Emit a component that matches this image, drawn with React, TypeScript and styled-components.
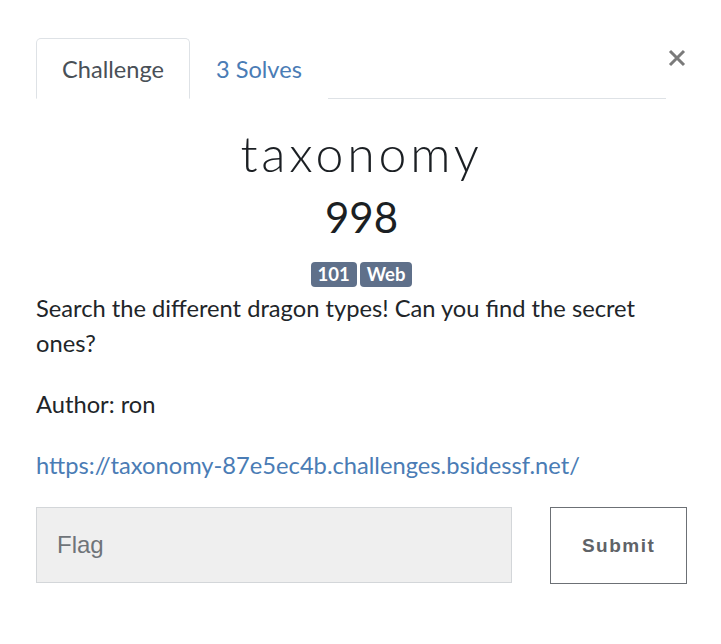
import React from "react";
import styled, { createGlobalStyle } from "styled-components";

const Global = createGlobalStyle`
  html, body {
    margin: 0;
    padding: 0;
    background: #ffffff;
    font-family: Lato, "Noto Sans", sans-serif;
    color: #212529;
  }
`;

const Modal = styled.div`
  width: 651px;
  padding: 38px 34px 0 36px;
`;

const Header = styled.div`
  display: flex;
  align-items: flex-start;
`;

const Tabs = styled.ul`
  flex: 1;
  display: flex;
  margin: 0;
  padding: 0;
  list-style: none;
  border-bottom: 1px solid #dee2e6;
`;

const Tab = styled.li<{ $active?: boolean }>`
  margin-bottom: -1px;
  padding: 15px 25px 14px;
  font-size: 23.6px;
  line-height: 30px;
  border: 1px solid ${(p) => (p.$active ? "#dee2e6" : "transparent")};
  border-bottom-color: ${(p) => (p.$active ? "#ffffff" : "transparent")};
  border-radius: 5px 5px 0 0;
  background: #fff;
  color: ${(p) => (p.$active ? "#495057" : "#4a7cb5")};
`;

const Close = styled.button`
  border: none;
  background: none;
  padding: 0;
  margin: 9px 0 0 0;
  width: 21px;
  height: 21px;
  display: flex;
  align-items: center;
  justify-content: center;
  cursor: pointer;
`;

const Title = styled.h2`
  margin: 24px 0 0;
  text-align: center;
  font-family: Lato, sans-serif;
  font-weight: 300;
  font-size: 50px;
  line-height: 60px;
  letter-spacing: 3.8px;
  color: #1b1f23;
`;

const Value = styled.h3`
  margin: 9px 0 0;
  text-align: center;
  font-weight: 400;
  font-size: 42px;
  line-height: 50px;
  color: #1b1f23;
`;

const Tags = styled.div`
  display: flex;
  justify-content: center;
  gap: 3px;
  margin-top: 20px;
`;

const Badge = styled.span`
  display: inline-block;
  padding: 0 7px;
  height: 25px;
  line-height: 25px;
  border-radius: 4px;
  background: #5f708a;
  color: #ffffff;
  font-weight: 700;
  font-size: 18.5px;
`;

const Description = styled.div`
  margin-top: 4px;
  font-size: 23.7px;
  line-height: 35px;
  color: #212529;

  p {
    margin: 0 0 26px;
  }

  p:last-child {
    margin-bottom: 24px;
  }

  a {
    color: #4a7cb5;
    text-decoration: none;
  }
`;

const FlagRow = styled.form`
  display: flex;
  gap: 38px;
`;

const FlagInput = styled.input`
  width: 477px;
  height: 76px;
  box-sizing: border-box;
  padding: 0 20px;
  border: 1px solid #d3d6d9;
  background: #efefef;
  font-family: "Liberation Sans", Arial, sans-serif;
  font-size: 24px;
  color: #333;

  &::placeholder {
    color: #6f7479;
  }
`;

const SubmitButton = styled.button`
  width: 137px;
  height: 77px;
  box-sizing: border-box;
  border: 1px solid #6c7075;
  background: #ffffff;
  color: #5f6368;
  font-family: "Liberation Sans", Arial, sans-serif;
  font-weight: 700;
  font-size: 19px;
  letter-spacing: 1.5px;
`;

export default function App() {
  return (
    <>
      <Global />
      <Modal>
        <Header>
          <Tabs>
            <Tab $active>Challenge</Tab>
            <Tab>3 Solves</Tab>
          </Tabs>
          <Close aria-label="Close">
            <svg width="18" height="18" viewBox="0 0 18 18">
              <path d="M2 2 L16 16 M16 2 L2 16" stroke="#7a7a7a" strokeWidth="3" />
            </svg>
          </Close>
        </Header>
        <Title>taxonomy</Title>
        <Value>998</Value>
        <Tags>
          <Badge>101</Badge>
          <Badge>Web</Badge>
        </Tags>
        <Description>
          <p>Search the different dragon types! Can you find the secret ones?</p>
          <p>Author: ron</p>
          <p>
            <a href="#">https://taxonomy-87e5ec4b.challenges.bsidessf.net/</a>
          </p>
        </Description>
        <FlagRow onSubmit={(e) => e.preventDefault()}>
          <FlagInput placeholder="Flag" />
          <SubmitButton type="submit">Submit</SubmitButton>
        </FlagRow>
      </Modal>
    </>
  );
}
